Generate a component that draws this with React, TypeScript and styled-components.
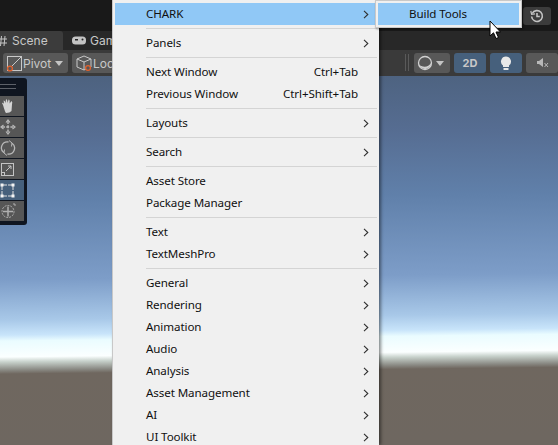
import React from "react";
import styled, { createGlobalStyle } from "styled-components";

const Global = createGlobalStyle`
  html, body { margin: 0; padding: 0; width: 558px; height: 445px; overflow: hidden; background: #191919; }
  #root { width: 558px; height: 445px; }
  * { box-sizing: border-box; }
`;

const Stage = styled.div`
  position: relative;
  width: 558px;
  height: 445px;
  overflow: hidden;
  display: flex;
  flex-direction: column;
  font-family: "Noto Sans", "Open Sans", sans-serif;
`;

const TopBar = styled.div`
  height: 31px;
  flex: none;
  background: #191919;
  display: flex;
  justify-content: flex-end;
  padding: 7px 7px 0 0;
`;

const HistoryBtn = styled.div`
  width: 28px;
  height: 18px;
  background: #3c3c3c;
  border-radius: 3px;
  display: flex;
  align-items: center;
  justify-content: center;
`;

const TabBar = styled.div`
  height: 19px;
  flex: none;
  background: #282828;
  display: flex;
`;

const Tab = styled.div<{ $active?: boolean }>`
  width: ${(p) => (p.$active ? "63px" : "70px")};
  margin-left: ${(p) => (p.$active ? "0" : "1px")};
  background: ${(p) => (p.$active ? "#3c3c3c" : "#282828")};
  border-radius: 0 3px 0 0;
  color: #c8c8c8;
  font: 12px "Inter", "Noto Sans", sans-serif;
  display: flex;
  align-items: center;
  gap: 4px;
  padding-left: ${(p) => (p.$active ? "0" : "8px")};
`;

const ToolBar = styled.div`
  height: 26px;
  flex: none;
  background: #3a3a3a;
  display: flex;
  align-items: flex-start;
  padding: 3px 0 0 3px;
  position: relative;
`;

const ToolGroup = styled.div`
  display: flex;
  align-items: center;
  gap: 4px;
`;

const RightTools = styled.div`
  margin-left: 277px;
  display: flex;
  align-items: center;
  gap: 4px;
`;

const ToolBtn = styled.div<{ $w: number; $on?: boolean }>`
  width: ${(p) => p.$w}px;
  height: 20px;
  background: ${(p) => (p.$on ? "#46607c" : "#585858")};
  border-radius: 3px;
  color: #c8c8c8;
  font: ${(p) => (p.$on ? "700 11px" : "12px")} "Inter", "Noto Sans", sans-serif;
  display: flex;
  align-items: center;
  justify-content: ${(p) => (p.$on ? "center" : "flex-start")};
  gap: 1px;
  overflow: hidden;
  white-space: nowrap;
  flex: none;
`;

const DragHandle = styled.div`
  position: absolute;
  left: 405px;
  top: 4px;
  width: 4px;
  height: 17px;
  border-left: 1px solid #5a5a5a;
  border-right: 1px solid #5a5a5a;
`;

const Scene = styled.div`
  flex: 1;
  position: relative;
  background: linear-gradient(
    179.3deg,
    #4d627f 0px,
    #566d92 60px,
    #6080aa 124px,
    #7d9dc8 204px,
    #a8c8e8 244px,
    #c8e4fa 259px,
    #eafcff 265px,
    #fbffff 281px,
    #c8d2cc 286px,
    #8a8a84 294px,
    #6f675f 298px,
    #6e6760 369px
  );
`;

const Gizmos = styled.div`
  position: absolute;
  left: 0;
  top: 2px;
  width: 27px;
  height: 147px;
  background: #0f1520;
  border-radius: 0 3px 3px 0;
  padding: 6px 3px 0 0;
  display: flex;
  flex-direction: column;
`;

const Handle = styled.div`
  height: 5px;
  width: 16px;
  border-top: 1px solid #5c6068;
  border-bottom: 1px solid #5c6068;
  margin-bottom: 7px;
`;

const GizmoBtn = styled.div<{ $on?: boolean }>`
  height: 20px;
  margin-bottom: 1px;
  background: ${(p) => (p.$on ? "#46607c" : "#565656")};
  display: flex;
  align-items: center;
  justify-content: flex-start;
`;

const Menu = styled.div`
  position: absolute;
  left: 112px;
  top: 0;
  width: 267px;
  height: 445px;
  background: #f0f0f0;
  border-left: 1px solid #c8c8c8;
  box-shadow: 2px 0 3px rgba(0, 0, 0, 0.45);
  padding: 3px 1px 0 2px;
`;

const Row = styled.div<{ $hl?: boolean }>`
  height: 22px;
  display: flex;
  align-items: center;
  padding: 0 9px 2px 31px;
  font-size: 11.6px;
  letter-spacing: -0.1px;
  color: #101010;
  white-space: nowrap;
  background: ${(p) => (p.$hl ? "#90c8f6" : "transparent")};
`;

const Label = styled.span`
  flex: 1;
`;

const Shortcut = styled.span`
  padding-right: 11px;
`;

const Sep = styled.div`
  height: 1px;
  margin: 3px 1px 3px 31px;
  background: #d4d4d4;
`;

const SubMenu = styled.div`
  position: absolute;
  left: 375px;
  top: 0;
  width: 147px;
  height: 28px;
  background: #f0f0f0;
  border: 1px solid #c8c8c8;
  box-shadow: 1px 1px 2px rgba(0, 0, 0, 0.4);
  padding: 2px;
`;

const SubRow = styled.div`
  height: 22px;
  background: #90c8f6;
  display: flex;
  align-items: center;
  padding: 0 0 2px 31px;
  font-size: 11.6px;
  letter-spacing: -0.1px;
  color: #101010;
`;

const Cursor = styled.svg`
  position: absolute;
  left: 489px;
  top: 20px;
`;

const Chevron = () => (
  <svg width="6" height="9" viewBox="0 0 6 9" fill="none" style={{ marginTop: 2 }}>
    <path d="M1 0.8 L4.8 4.5 L1 8.2" stroke="#303030" strokeWidth="1.1" />
  </svg>
);

const Item = ({ label, sub = true, hint }: { label: string; sub?: boolean; hint?: string }) => (
  <Row>
    <Label>{label}</Label>
    {hint && <Shortcut>{hint}</Shortcut>}
    {sub && <Chevron />}
  </Row>
);

export default function App() {
  return (
    <Stage>
      <Global />
      <TopBar>
        <HistoryBtn>
          <svg width="14" height="14" viewBox="0 0 14 14" fill="none" stroke="#c4c4c4" strokeWidth="1.6">
            <path d="M2.2 4.5 A5.4 5.4 0 1 1 1.6 7.5" />
            <path d="M0.8 2 L1.6 5.4 L5 4.8" strokeWidth="1.2" />
            <path d="M7 4 V7.5 H9.8" />
          </svg>
        </HistoryBtn>
      </TopBar>
      <TabBar>
        <Tab $active>
          <svg width="8" height="10" viewBox="0 0 8 10" stroke="#c4c4c4" strokeWidth="1" fill="none">
            <path d="M1.5 0 L0.5 10 M5 0 L4 10 M-2 3 H7 M-2 7 H7" />
          </svg>
          <span>Scene</span>
        </Tab>
        <Tab>
          <svg width="14" height="9" viewBox="0 0 14 9">
            <rect x="0" y="0.5" width="14" height="8" rx="3.5" fill="#c4c4c4" />
            <rect x="3" y="3" width="3" height="1.5" fill="#282828" />
            <circle cx="10.5" cy="3.5" r="1" fill="#282828" />
          </svg>
          <span>Game</span>
        </Tab>
      </TabBar>
      <ToolBar>
        <ToolGroup>
          <ToolBtn $w={65}>
            <svg width="16" height="17" viewBox="0 0 16 17" fill="none" style={{ marginLeft: 3 }}>
              <rect x="1.5" y="1.5" width="14" height="14" stroke="#c8c8c8" />
              <path d="M3 14 L15.5 1.5" stroke="#c8c8c8" />
              <circle cx="4" cy="13.5" r="2.4" stroke="#e0612d" strokeWidth="1.3" fill="#585858" />
            </svg>
            <span>Pivot</span>
            <svg width="8" height="5" viewBox="0 0 8 5" style={{ marginLeft: 3 }}>
              <path d="M0 0 H8 L4 5 Z" fill="#c4c4c4" />
            </svg>
          </ToolBtn>
          <ToolBtn $w={65}>
            <svg width="16" height="17" viewBox="0 0 16 17" fill="none" style={{ marginLeft: 4 }}>
              <path d="M8 1 L15 4 V12 L8 15 L1 12 V4 Z M1 4 L8 7 L15 4 M8 7 V15" stroke="#c8c8c8" />
              <circle cx="12" cy="13" r="2.4" stroke="#e0612d" strokeWidth="1.3" fill="#585858" />
            </svg>
            <span>Local</span>
          </ToolBtn>
        </ToolGroup>
        <DragHandle />
        <RightTools>
          <ToolBtn $w={36}>
            <svg width="36" height="20" viewBox="0 0 36 20">
              <circle cx="11" cy="10" r="6.5" fill="none" stroke="#d0d0d0" strokeWidth="1.3" />
              <path d="M4.6 11 A6.5 6.5 0 0 0 17.4 9 A7 6 0 0 1 9 13.5 A7 7 0 0 1 4.6 11 Z" fill="#d0d0d0" />
              <path d="M22 8 H30 L26 13 Z" fill="#c4c4c4" />
            </svg>
          </ToolBtn>
          <ToolBtn $w={32} $on>2D</ToolBtn>
          <ToolBtn $w={32} $on>
            <svg width="12" height="15" viewBox="0 0 12 15">
              <path d="M6 0.5 A5 5 0 0 1 9 9.5 V11 H3 V9.5 A5 5 0 0 1 6 0.5 Z" fill="#e8e8e8" />
              <rect x="3.5" y="12" width="5" height="2" fill="#e8e8e8" />
            </svg>
          </ToolBtn>
          <ToolBtn $w={32}>
            <svg width="32" height="20" viewBox="0 0 32 20" fill="#b8b8b8">
              <path d="M11 8 H13 L17 5 V14 L13 11 H11 Z" />
              <path d="M18.5 10 L22 14 M22 10 L18.5 14" stroke="#b8b8b8" fill="none" />
            </svg>
          </ToolBtn>
        </RightTools>
      </ToolBar>
      <Scene>
        <Gizmos>
          <Handle />
          <GizmoBtn>
            <svg width="16" height="16" viewBox="0 0 16 16" fill="#d4d4d4">
              <path d="M3 7 L2 5 Q3 4 4 6 L3.6 2.5 Q5 2 5.5 5 L6 1.2 Q7.5 1 7.5 5 L8.6 1.5 Q10 1.5 9.6 5.5 L11.5 3 Q12.8 3.5 12 6.5 L11.5 13 Q10 15 6 15 Q5 14 3 7 Z" />
            </svg>
          </GizmoBtn>
          <GizmoBtn>
            <svg width="16" height="16" viewBox="0 0 16 16" fill="none" stroke="#b8b8b8" strokeWidth="1.5">
              <path d="M8 2 V14 M2 8 H14" strokeDasharray="3 1.2" />
              <path d="M6 3.5 L8 1 L10 3.5 M6 12.5 L8 15 L10 12.5 M3.5 6 L1 8 L3.5 10 M12.5 6 L15 8 L12.5 10" strokeWidth="1.2" />
            </svg>
          </GizmoBtn>
          <GizmoBtn>
            <svg width="16" height="16" viewBox="0 0 16 16" fill="none" stroke="#b8b8b8" strokeWidth="1.3">
              <path d="M8.5 2 A6 6 0 0 0 4 12.8 M7.5 14 A6 6 0 0 0 12 3.2" />
              <path d="M9 0.5 L12 3 L11.5 6.5 M7 15.5 L4 13 L4.5 9.5" strokeWidth="1" />
            </svg>
          </GizmoBtn>
          <GizmoBtn>
            <svg width="15" height="15" viewBox="0 0 15 15" fill="none" stroke="#c4c4c4" strokeWidth="1">
              <rect x="1.5" y="1.5" width="12" height="12" />
              <rect x="1.5" y="10.5" width="3" height="3" />
              <path d="M6 9 L11 4 M8 4 H11 V7" />
            </svg>
          </GizmoBtn>
          <GizmoBtn $on>
            <svg width="15" height="15" viewBox="0 0 15 15">
              <path d="M2 3 V12 M13 3 V12 M3 2 H12 M3 13 H12" stroke="#e0e0e0" strokeWidth="1" strokeDasharray="4 1" fill="none" />
              <rect x="0.5" y="0.5" width="3" height="3" fill="#f4f4f4" />
              <rect x="11.5" y="0.5" width="3" height="3" fill="#f4f4f4" />
              <rect x="0.5" y="11.5" width="3" height="3" fill="#f4f4f4" />
              <rect x="11.5" y="11.5" width="3" height="3" fill="#f4f4f4" />
            </svg>
          </GizmoBtn>
          <GizmoBtn>
            <svg width="16" height="16" viewBox="0 0 16 16" fill="none" stroke="#b0b0b0" strokeWidth="1">
              <circle cx="8" cy="8.5" r="6" strokeDasharray="2 1" />
              <path d="M8 3.5 V13.5 M3 8.5 H13" strokeWidth="1.5" />
              <path d="M13 1 L15 1 L15 3" />
            </svg>
          </GizmoBtn>
        </Gizmos>
      </Scene>
      <Menu>
        <Row $hl>
          <Label>CHARK</Label>
          <Chevron />
        </Row>
        <Sep />
        <Item label="Panels" />
        <Sep />
        <Item label="Next Window" sub={false} hint="Ctrl+Tab" />
        <Item label="Previous Window" sub={false} hint="Ctrl+Shift+Tab" />
        <Sep />
        <Item label="Layouts" />
        <Sep />
        <Item label="Search" />
        <Sep />
        <Item label="Asset Store" sub={false} />
        <Item label="Package Manager" sub={false} />
        <Sep />
        <Item label="Text" />
        <Item label="TextMeshPro" />
        <Sep />
        <Item label="General" />
        <Item label="Rendering" />
        <Item label="Animation" />
        <Item label="Audio" />
        <Item label="Analysis" />
        <Item label="Asset Management" />
        <Item label="AI" />
        <Item label="UI Toolkit" />
      </Menu>
      <SubMenu>
        <SubRow>Build Tools</SubRow>
      </SubMenu>
      <Cursor width="14" height="21" viewBox="0 0 14 21">
        <path d="M1 1 V16 L4.5 12.8 L7 18.5 L9.5 17.5 L7 12 H11.5 Z" fill="#fff" stroke="#000" strokeWidth="1" />
      </Cursor>
    </Stage>
  );
}
